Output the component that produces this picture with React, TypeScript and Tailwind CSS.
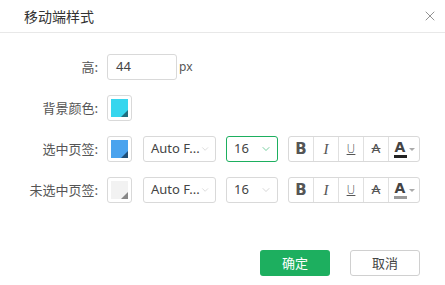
import { X, ChevronDown } from 'lucide-react';

const cjk = { fontFamily: '"Noto Sans CJK SC", "Noto Sans", sans-serif' };

function Swatch({ color, corner }: { color: string; corner: string }) {
  return (
    <div className="w-[25px] h-[26px] border border-[#d9d9d9] rounded-[3px] p-[3px] bg-white">
      <div className="relative w-full h-full" style={{ background: color }}>
        <div
          className="absolute right-0 bottom-0 w-0 h-0 border-l-[7px] border-l-transparent border-b-[7px]"
          style={{ borderBottomColor: corner }}
        />
      </div>
    </div>
  );
}

function Select({ text, w, active }: { text: string; w: string; active?: boolean }) {
  return (
    <div
      className={`${w} h-[26px] rounded-[3px] border flex items-center justify-between pl-[7px] pr-[5px] text-[13px] text-[#444] whitespace-nowrap ${
        active ? 'border-[#1daf5f]' : 'border-[#d9d9d9]'
      }`}
      style={{ fontFamily: '"Noto Sans", sans-serif' }}
    >
      <span>{text}</span>
      <ChevronDown size={12} strokeWidth={1.2} className={active ? 'text-[#1daf5f]' : 'text-[#bbb]'} />
    </div>
  );
}

function Toolbar({ bar }: { bar: string }) {
  const cell = 'w-[25px] h-full flex items-center justify-center border-r border-[#e0e0e0] text-[#555]';
  return (
    <div className="h-[26px] flex border border-[#d9d9d9] rounded-[3px] overflow-hidden" style={{ fontFamily: '"DejaVu Sans", sans-serif' }}>
      <div className={cell}><span className="font-bold text-[15px]">B</span></div>
      <div className={cell}><span className="italic text-[15px]" style={{ fontFamily: '"Liberation Serif", serif' }}>I</span></div>
      <div className={cell}><span className="underline text-[12px] font-light">U</span></div>
      <div className={cell}><span className="line-through text-[13px]">A</span></div>
      <div className="w-[30px] h-full flex items-center justify-center gap-[2px]">
        <div className="flex flex-col items-center">
          <span className="font-bold text-[14px] leading-[14px] text-[#444]">A</span>
          <div className="w-[13px] h-[3px] mt-[1px]" style={{ background: bar }} />
        </div>
        <div className="w-0 h-0 border-l-[3px] border-r-[3px] border-t-[3px] border-l-transparent border-r-transparent border-t-[#aaa]" />
      </div>
    </div>
  );
}

function Row({ label, children }: { label: string; children: React.ReactNode }) {
  return (
    <div className="flex items-center h-[26px]">
      <div className="w-[98px] text-right text-[13px] text-[#555]" style={cjk}>{label}</div>
      <div className="ml-[9px] flex items-center">{children}</div>
    </div>
  );
}

export default function App() {
  return (
    <div className="w-[445px] h-[285px] bg-white flex flex-col" style={cjk}>
      <div className="h-[33px] border-b border-[#e8e8e8] flex items-center justify-between pl-[24px] pr-[7px]">
        <span className="text-[14px] text-[#333]">移动端样式</span>
        <X size={16} strokeWidth={1.2} className="text-[#777]" />
      </div>
      <div className="flex flex-col gap-[15px] pt-[21px]">
        <Row label="高:">
          <div className="w-[70px] h-[26px] border border-[#d9d9d9] rounded-[3px] flex items-center pl-[8px] text-[13px] text-[#444]" style={{ fontFamily: '"Noto Sans", sans-serif' }}>44</div>
          <span className="ml-[2px] text-[12px] text-[#555]" style={{ fontFamily: '"Noto Sans", sans-serif' }}>px</span>
        </Row>
        <Row label="背景颜色:">
          <Swatch color="#36d6ee" corner="#1f6f80" />
        </Row>
        <Row label="选中页签:">
          <Swatch color="#4aa3ee" corner="#1f4f78" />
          <div className="ml-[11px]"><Select text="Auto F..." w="w-[73px]" /></div>
          <div className="ml-[10px]"><Select text="16" w="w-[52px]" active /></div>
          <div className="ml-[10px]"><Toolbar bar="#222" /></div>
        </Row>
        <Row label="未选中页签:">
          <Swatch color="#f2f2f2" corner="#888" />
          <div className="ml-[11px]"><Select text="Auto F..." w="w-[73px]" /></div>
          <div className="ml-[10px]"><Select text="16" w="w-[52px]" /></div>
          <div className="ml-[10px]"><Toolbar bar="#999" /></div>
        </Row>
      </div>
      <div className="mt-auto mb-[9px] flex justify-end gap-[20px] pr-[25px]">
        <button className="w-[70px] h-[26px] rounded-[3px] bg-[#1daf5f] text-white text-[13px]">确定</button>
        <button className="w-[70px] h-[26px] rounded-[3px] border border-[#d0d0d0] bg-white text-[#444] text-[13px]">取消</button>
      </div>
    </div>
  );
}
